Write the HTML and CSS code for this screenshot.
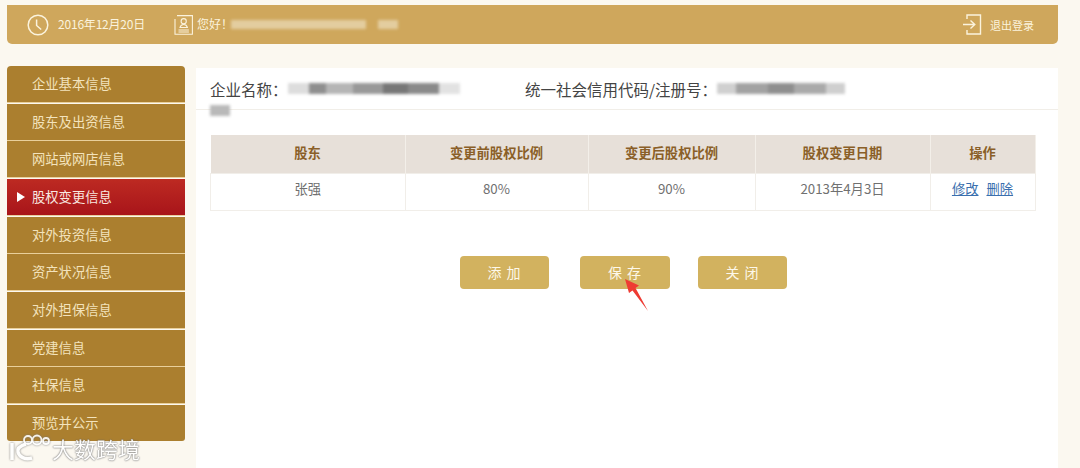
FILE: index.html
```html
<!DOCTYPE html>
<html lang="zh-CN">
<head>
    <meta charset="UTF-8">
    <title>股权变更信息</title>
    <link rel="stylesheet" href="styles.css">
</head>
<body>
    <div class="top-strip"></div>
    <header class="topbar">
        <div class="topbar-left">
            <svg class="icon-clock" width="22" height="22" viewBox="0 0 22 22" fill="none" stroke="#fbf3dd" stroke-width="1.5">
                <circle cx="11" cy="11" r="9.8"/>
                <path d="M9.6 5.5v6l4.6 4"/>
            </svg>
            <span class="date">2016年12月20日</span>
            <svg class="icon-user" width="19" height="20" viewBox="0 0 19 20" fill="none" stroke="#fbf3dd" stroke-width="1.1">
                <path d="M3 .6h15.4v18.6H1V4"/>
                <circle cx="9.7" cy="6.2" r="2.6"/>
                <path d="M6 12.5c.5-2 2-3 3.700-3s3.200 1 3.700 3z"/>
                <path d="M4.5 15h10.4M4.5 17h10.4"/>
            </svg>
            <span class="hello">您好！</span>
            <span class="mask-light mask-name"></span>
            <span class="mask-light mask-short"></span>
        </div>
        <a class="logout">
            <svg width="20" height="21" viewBox="0 0 20 21" fill="none" stroke="#fbf3dd" stroke-width="1.4">
                <path d="M5 5V1h13.5v19H5v-4"/>
                <path d="M1 10.5h11M8.5 6.500l4.300 4-4.300 4"/>
            </svg>
            <span>退出登录</span>
        </a>
    </header>

    <div class="content">
        <ul class="sidebar">
            <li>企业基本信息</li>
            <li>股东及出资信息</li>
            <li>网站或网店信息</li>
            <li class="active">股权变更信息</li>
            <li>对外投资信息</li>
            <li>资产状况信息</li>
            <li>对外担保信息</li>
            <li>党建信息</li>
            <li>社保信息</li>
            <li>预览并公示</li>
        </ul>

        <main class="panel">
            <div class="panel-title">
                <div class="title-item title-company">
                    <span>企业名称：</span>
                    <span class="mask-dark mask-company"></span>
                </div>
                <div class="title-item">
                    <span>统一社会信用代码/注册号：</span>
                    <span class="mask-dark mask-code"></span>
                </div>
                <span class="mask-dark mask-wrap"></span>
            </div>

            <table class="record-table">
                <thead>
                    <tr>
                        <th class="col-1">股东</th>
                        <th class="col-2">变更前股权比例</th>
                        <th class="col-3">变更后股权比例</th>
                        <th class="col-4">股权变更日期</th>
                        <th class="col-5">操作</th>
                    </tr>
                </thead>
                <tbody>
                    <tr>
                        <td>张强</td>
                        <td>80%</td>
                        <td>90%</td>
                        <td>2013年4月3日</td>
                        <td><a href="#">修改</a><a href="#">删除</a></td>
                    </tr>
                </tbody>
            </table>

            <div class="actions">
                <button class="btn">添 加</button>
                <button class="btn btn-save">保 存
                    <svg class="arrow" width="26" height="34" viewBox="0 0 26 34">
                        <path d="M1 1l14 6.5-3.500 2.500L24 33 8.500 12.500 5 15z" fill="#ee3b33"/>
                    </svg>
                </button>
                <button class="btn btn-close">关 闭</button>
            </div>
        </main>
    </div>

    <div class="watermark">
        <svg width="42" height="28" viewBox="0 0 42 28" fill="none" stroke="#fff" stroke-width="3.5">
            <path d="M4 9v17"/>
            <path d="M18 10c-6 2-9 5-8 8 1 5 7 8 14 6"/>
            <circle cx="20" cy="6" r="4" stroke-width="1.8"/>
            <circle cx="29" cy="6" r="4.500" stroke-width="1.8"/>
            <circle cx="38" cy="7" r="3" stroke-width="1.8"/>
        </svg>
        <span>大数跨境</span>
    </div>
</body>
</html>
```

FILE: styles.css
```css
html, body {
    margin: 0;
    padding: 0;
    height: 468px;
    overflow: hidden;
    background-color: #fbf8f0;
    font-family: "Noto Sans CJK SC", "Open Sans", sans-serif;
}
.top-strip {
    height: 5px;
    background-color: #fbf8f0;
}
.topbar {
    height: 39px;
    margin: 0 22px 0 7px;
    padding: 0 24px 0 20px;
    display: flex;
    justify-content: space-between;
    align-items: center;
    background-color: #cfa75c;
    border-radius: 0 0 5px 5px;
    color: #fbf3dd;
    font-size: 12px;
}
.topbar-left {
    display: flex;
    align-items: center;
}
.icon-clock {
    margin-right: 9px;
}
.date {
    width: 116px;
    margin-bottom: 3px;
    letter-spacing: -0.2px;
}
.hello {
    margin-left: 4px;
    width: 34px;
    margin-bottom: 3px;
    white-space: nowrap;
}
.mask-light {
    height: 9px;
    background-color: #e3cd9f;
    filter: blur(1.5px);
}
.mask-name {
    width: 135px;
}
.mask-short {
    width: 20px;
    margin-left: 12px;
}
.logout {
    display: flex;
    align-items: center;
    gap: 8px;
    font-size: 11px;
}
.content {
    display: flex;
    align-items: flex-start;
    margin: 22px 22px 0 7px;
}
.sidebar {
    list-style: none;
    margin: 0 11px 0 0;
    padding: 0;
    width: 178px;
    flex: none;
}
.sidebar li {
    position: relative;
    height: 36px;
    line-height: 35px;
    margin-bottom: 0.67px;
    padding-left: 25px;
    background-color: #ab7f2f;
    color: #f3e3bd;
    font-size: 13.3px;
    border-bottom: 1px solid #e9cf9b;
}
.sidebar li:first-child {
    border-radius: 4px 4px 0 0;
}
.sidebar li:last-child {
    border-bottom: none;
    border-radius: 0 0 3px 3px;
}
.sidebar .active {
    background: linear-gradient(#bd2a22, #a8151a);
    color: #f9e8e0;
}
.sidebar .active::before {
    content: "";
    position: absolute;
    left: 10px;
    top: 13px;
    border-left: 8px solid #fff;
    border-top: 5px solid transparent;
    border-bottom: 5px solid transparent;
}
.panel {
    flex: 1;
    height: 400px;
    margin-top: 2px;
    padding: 0;
    background-color: #fff;
}
.panel-title {
    position: relative;
    height: 42px;
    display: flex;
    align-items: center;
    padding: 0 0 0 14px;
    box-sizing: border-box;
    border-bottom: 1px solid #f1eee8;
    color: #444;
    font-size: 15.5px;
}
.title-item {
    display: flex;
    align-items: center;
}
.title-company {
    width: 315px;
}
.mask-dark {
    height: 11px;
    background: linear-gradient(90deg, #ddd 0 12%, #8f8f8f 12% 22%, #b5b5b5 22% 38%, #999 38% 55%, #777 55% 70%, #8a8a8a 70% 88%, #e2e2e2 88%);
    filter: blur(1.5px);
}
.mask-company {
    width: 172px;
}
.mask-code {
    width: 128px;
    background: linear-gradient(90deg, #d0d0d0 0 15%, #a2a2a2 15% 40%, #8f8f8f 40% 60%, #aaa 60% 85%, #cfcfcf 85%);
}
.mask-wrap {
    position: absolute;
    left: 14px;
    top: 37px;
    width: 20px;
    background: #b9b9b9;
}
.record-table {
    margin: 25px 0 0 14px;
    border-collapse: collapse;
    table-layout: fixed;
    font-size: 13.3px;
    color: #707070;
    text-align: center;
}
.record-table th {
    height: 34px;
    padding: 0 0 4px;
    background-color: #e7e0d9;
    border-right: 1px solid #f3efe9;
    color: #8a5f28;
    font-weight: bold;
}
.record-table td {
    height: 28px;
    padding: 0 0 8px;
    border: 1px solid #f1eee9;
}
.col-1 { width: 194px; }
.col-2 { width: 182px; }
.col-3 { width: 166px; }
.col-4 { width: 174px; }
.col-5 { width: 104px; }
.record-table a {
    color: #3a6fae;
    margin: 0 4px;
}
.actions {
    display: flex;
    margin: 45px 0 0 264px;
    gap: 31px;
}
.btn {
    position: relative;
    width: 89px;
    height: 33px;
    padding: 0 0 2px;
    border: none;
    border-radius: 4px;
    background-color: #d2b25f;
    color: #fdf8ea;
    font-family: inherit;
    font-size: 14px;
    letter-spacing: 1px;
}
.btn-save {
    width: 90px;
}
.btn-close {
    margin-left: -3px;
}
.arrow {
    position: absolute;
    left: 44px;
    top: 22px;
}
.watermark {
    position: absolute;
    left: 8px;
    top: 433px;
    display: flex;
    align-items: center;
    gap: 2px;
    color: #fff;
    font-size: 22px;
    line-height: 30px;
    opacity: 0.9;
    text-shadow: 0 0 2px #666, 0 0 1px #666;
}
.watermark svg {
    filter: drop-shadow(0 0 1px #777);
}
```
